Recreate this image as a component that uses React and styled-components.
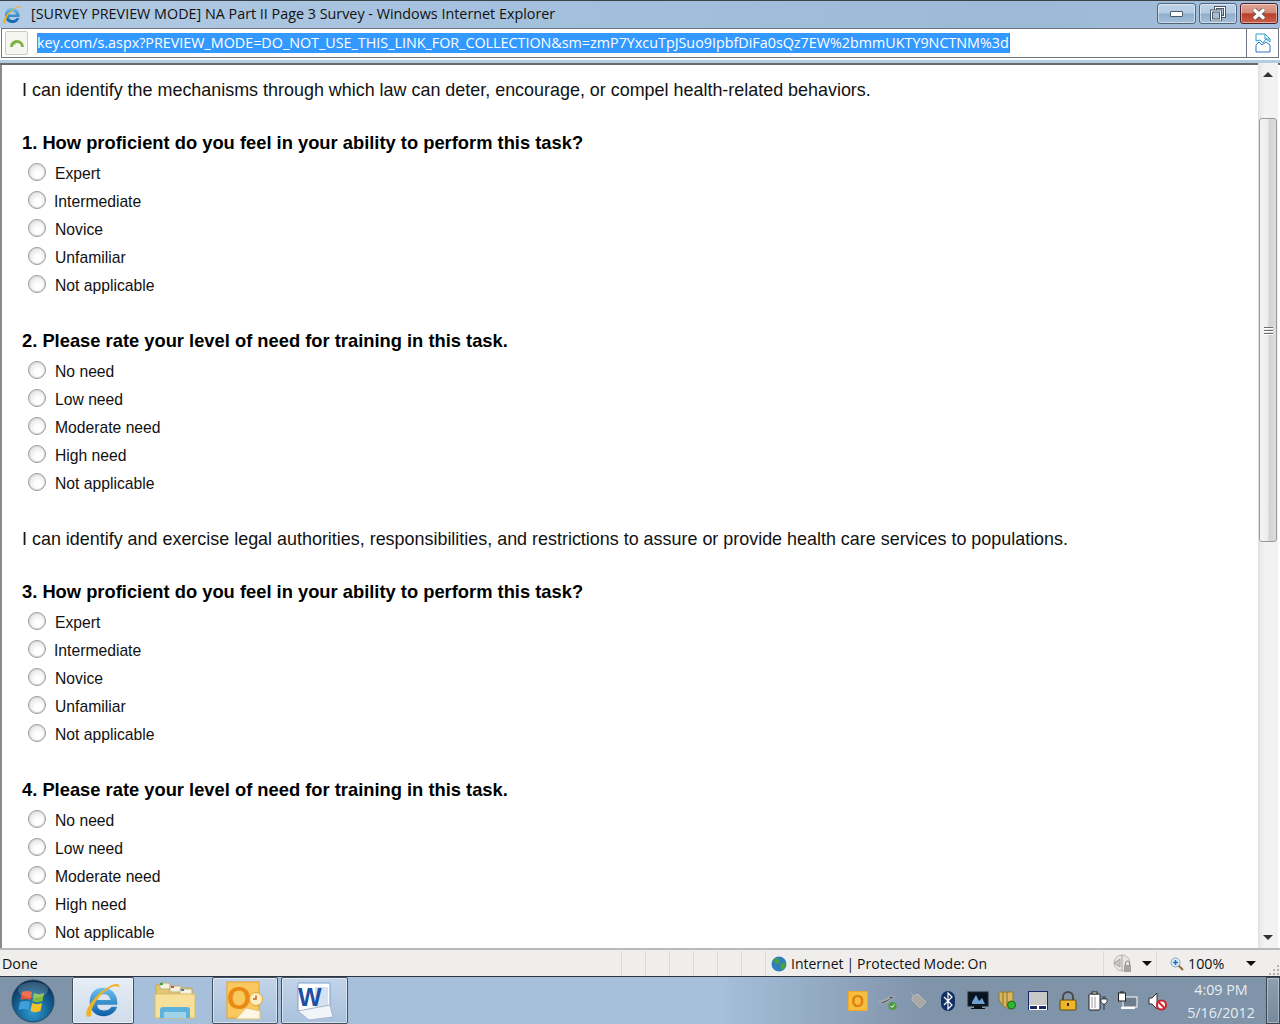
import React from 'react';
import styled, { createGlobalStyle } from 'styled-components';

const sections = [
  {
    intro: 'I can identify the mechanisms through which law can deter, encourage, or compel health-related behaviors.',
    n: 1,
  },
  {
    intro: 'I can identify and exercise legal authorities, responsibilities, and restrictions to assure or provide health care services to populations.',
    n: 3,
  },
];
const proficiency = ['Expert', 'Intermediate', 'Novice', 'Unfamiliar', 'Not applicable'];
const need = ['No need', 'Low need', 'Moderate need', 'High need', 'Not applicable'];

const Question = ({ title, options }) => (
  <QuestionBlock>
    <QuestionTitle>{title}</QuestionTitle>
    {options.map(o => (
      <Option key={o}>
        <Radio />
        <OptionLabel $tight={o === 'Intermediate'}>{o}</OptionLabel>
      </Option>
    ))}
  </QuestionBlock>
);

const IeLogo = ({ size }) => (
  <svg width={size} height={size} viewBox="0 0 40 40">
    <defs>
      <linearGradient id="ieBlue" x1="0" y1="0" x2="0" y2="1">
        <stop offset="0" stopColor="#6fc3ee" />
        <stop offset="1" stopColor="#0b5fa8" />
      </linearGradient>
    </defs>
    <path fillRule="evenodd" d="M20 6c9 0 15 7 15 15v3H14c0 4 3 6 7 6 3 0 6-1 8-4h6c-2 6-8 10-14 10-9 0-15-6-15-15S11 6 20 6zm-6 13h14c-1-4-3-6-7-6s-6 2-7 6z" fill="url(#ieBlue)" />
    <path d="M3 36C-1 30 14 10 30 3c5-2 8-1 7 3-1-2-4-2-7-1C17 11 6 27 8 35c-2 2-4 2-5 1z" fill="#eeb422" />
  </svg>
);

const StartOrb = () => (
  <svg width="44" height="44" viewBox="0 0 44 44">
    <defs>
      <radialGradient id="orb" cx="0.5" cy="0.75" r="0.75">
        <stop offset="0" stopColor="#2d9cd3" />
        <stop offset="0.7" stopColor="#0f4f7e" />
        <stop offset="1" stopColor="#0a2a4a" />
      </radialGradient>
    </defs>
    <circle cx="22" cy="22" r="21" fill="url(#orb)" stroke="#274a68" />
    <path d="M11 13c3-1.500 7-1.500 10 0l-1.500 8c-3-1.500-7-1.500-10 0z" fill="#e8532b" />
    <path d="M23 14c3 1.500 7 1.500 10 0l-1.500 8c-3 1.500-7 1.500-10 0z" fill="#7db93c" />
    <path d="M9 23c3-1.500 7-1.500 10 0l-1.500 8c-3-1.500-7-1.500-10 0z" fill="#3f9fdc" />
    <path d="M21 24c3 1.500 7 1.500 10 0l-1.500 8c-3 1.500-7 1.500-10 0z" fill="#f4c02c" />
    <ellipse cx="22" cy="11" rx="15" ry="8" fill="#fff" opacity="0.18" />
  </svg>
);

const FolderIcon = () => (
  <svg width="42" height="42" viewBox="0 0 42 42">
    <path d="M2 5h12l2 3h22v28H2z" fill="#e3c66e" stroke="#c9a94d" />
    <rect x="6" y="3" width="10" height="6" fill="#f7f2da" stroke="#b9b08a" />
    <rect x="6" y="3" width="3" height="2" fill="#3aa04a" />
    <rect x="16" y="6" width="11" height="6" fill="#f7f2da" stroke="#b9b08a" />
    <rect x="17" y="6" width="3" height="2" fill="#d64b3c" />
    <rect x="26" y="9" width="12" height="6" fill="#f7f2da" stroke="#b9b08a" />
    <rect x="27" y="9" width="3" height="2" fill="#3a83c8" />
    <path d="M1 14h40v24H1z" fill="#f6e09a" stroke="#d6bb6b" />
    <path d="M6 38v-8c0-2 1-3 3-3h24c2 0 3 1 3 3v8h-4v-6H10v6z" fill="#5fb2dc" />
    <path d="M10 32h22v6H10z" fill="#9ed3ea" />
  </svg>
);

const OutlookIcon = () => (
  <svg width="38" height="40" viewBox="0 0 38 40">
    <rect x="1" y="1" width="32" height="36" fill="#f9c85e" stroke="#e8a22a" />
    <path d="M10 38l10-11 14 3v8z" fill="#fdf6e3" stroke="#e3c27c" />
    <text x="1" y="28" fontFamily="Liberation Sans, sans-serif" fontWeight="700" fontSize="31" fill="#ea8a12">O</text>
    <circle cx="30" cy="18" r="6.500" fill="#fbeec4" stroke="#e8a22a" />
    <path d="M30 14.500V18h-3" fill="none" stroke="#c8641a" strokeWidth="1.500" />
  </svg>
);

const WordIcon = () => (
  <svg width="40" height="40" viewBox="0 0 40 40">
    <path d="M3 2h32v28H3z" fill="#fff" stroke="#7f9ccc" />
    <path d="M20 6h13v20H20z" fill="#d5e2f3" />
    <path d="M3 30l32-6 3 12-24 3z" fill="#f1f4f9" stroke="#a8b5cb" />
    <text x="3" y="25" fontFamily="Liberation Sans, sans-serif" fontWeight="700" fontSize="25" fill="#1e4fa5">W</text>
  </svg>
);

const BrokenPageIcon = () => (
  <svg width="16" height="20" viewBox="0 0 16 20" fill="none">
    <path d="M1 8V1h9l5 5v3l-4-3-3 4-3-3z" stroke="#2a9fd6" />
    <path d="M10 1v5h5" stroke="#2a9fd6" />
    <path d="M1 12l3-3 3 3 4-3 4 3v7H1z" stroke="#2a72c6" />
  </svg>
);

const GlobeIcon = () => (
  <svg width="16" height="16" viewBox="0 0 16 16">
    <circle cx="8" cy="8" r="7.500" fill="#2f7fbd" />
    <path d="M4 2l4 1 1 3-3 2-3-2zM9 8l5-1 1 2-3 5-2-1z" fill="#4aa23d" />
  </svg>
);

const SecurityIcon = () => (
  <svg width="20" height="20" viewBox="0 0 20 20">
    <circle cx="9" cy="9" r="8" fill="#e8e6e4" stroke="#bdbbb9" />
    <path d="M1 9l6-4v8zM9 1v16" stroke="#a9a7a5" fill="#c9c7c5" />
    <rect x="11" y="11" width="7" height="7" fill="#a5a3a1" />
    <path d="M12.500 11V9a2 2 0 0 1 4 0v2" fill="none" stroke="#8d8b89" />
  </svg>
);

const ZoomIcon = () => (
  <svg width="14" height="14" viewBox="0 0 14 14">
    <path d="M8.500 8.500l4.500 4.500" stroke="#8a6a3a" strokeWidth="2" />
    <circle cx="5.500" cy="5.500" r="4.500" fill="#dcecf8" stroke="#8aa0b5" />
    <path d="M3 5.500h5M5.500 3v5" stroke="#1a6fd0" strokeWidth="1.500" />
  </svg>
);

const TrayOutlook = () => (
  <svg width="20" height="20" viewBox="0 0 20 20">
    <rect x="0.500" y="0.500" width="19" height="19" fill="#f6bd3f" stroke="#f0a72a" />
    <text x="3.500" y="16" fontFamily="Liberation Sans, sans-serif" fontWeight="700" fontSize="16" fill="#e0800f">O</text>
  </svg>
);
const TrayUsb = () => (
  <svg width="20" height="20" viewBox="0 0 20 20">
    <path d="M1 11l12-6 4 1-12 7z" fill="#5d6368" stroke="#d5d8da" strokeWidth="0.500" />
    <path d="M3 11l9-4" stroke="#c7cbce" />
    <circle cx="14.500" cy="15" r="4" fill="#4f9a3d" />
    <path d="M12.500 15l1.500 1.500 2.500-3" stroke="#fff" fill="none" />
  </svg>
);
const TrayDiamond = () => (
  <svg width="20" height="20" viewBox="0 0 20 20">
    <path d="M3 2l2 2" stroke="#b5bac0" />
    <path d="M10 3l8 8-6 6-8-8 1-4z" fill="#a9a8a5" stroke="#bdbcb8" />
  </svg>
);
const TrayBluetooth = () => (
  <svg width="16" height="20" viewBox="0 0 16 20">
    <rect x="1" y="0" width="14" height="20" rx="7" fill="#0f2f66" />
    <path d="M4 6l8 8-4 4V2l4 4-8 8" stroke="#fff" strokeWidth="1.200" fill="none" />
  </svg>
);
const TrayMonitor = () => (
  <svg width="22" height="20" viewBox="0 0 22 20">
    <rect x="1" y="1" width="20" height="14" fill="#08131f" stroke="#20262c" />
    <path d="M5 11l4-7 3 6 3-3 3 6H5z" fill="#6ea0d0" />
    <rect x="7" y="15" width="8" height="2" fill="#111" />
    <rect x="4" y="17" width="14" height="1" fill="#111" />
  </svg>
);
const TrayShield = () => (
  <svg width="20" height="20" viewBox="0 0 20 20">
    <path d="M1 1h14v10l-4 7-6-3-4-6z" fill="#d9b65c" stroke="#8f7a3e" />
    <path d="M5 1v13M9 1v15" stroke="#8a6f2c" />
    <circle cx="13.500" cy="14" r="4" fill="#2fb52f" stroke="#176a17" />
  </svg>
);
const TrayPad = () => (
  <svg width="20" height="20" viewBox="0 0 20 20">
    <rect x="0.500" y="0.500" width="19" height="18" fill="#c8c8c8" stroke="#1c2a6a" />
    <rect x="1" y="14" width="18" height="5" fill="#fff" />
    <rect x="2" y="15" width="7" height="3" fill="#1c2a6a" />
    <rect x="11" y="15" width="7" height="3" fill="#1c2a6a" />
  </svg>
);
const TrayLock = () => (
  <svg width="18" height="20" viewBox="0 0 18 20">
    <path d="M4 9V6a5 5 0 0 1 10 0v3" fill="none" stroke="#4a4a4a" strokeWidth="2" />
    <rect x="1" y="9" width="16" height="10" rx="1" fill="#efb428" stroke="#5e4a12" />
    <rect x="8" y="12" width="2" height="3" fill="#3a2c08" />
  </svg>
);
const TrayBattery = () => (
  <svg width="20" height="20" viewBox="0 0 20 20">
    <rect x="1" y="3" width="11" height="16" rx="1" fill="#fff" stroke="#222" />
    <rect x="4" y="1" width="5" height="2" fill="#fff" stroke="#222" />
    <path d="M4 6v11M7 6v11" stroke="#999" />
    <path d="M13 8h6v3l-2 2h-2l-2-2zM15 5v3M17 5v3M16 13v6" fill="#fff" stroke="#222" strokeWidth="0.800" />
  </svg>
);
const TrayNetwork = () => (
  <svg width="20" height="20" viewBox="0 0 20 20">
    <rect x="5" y="6" width="14" height="10" fill="#6f7d8c" stroke="#fff" />
    <path d="M3 16h14v2H3z" fill="#fff" />
    <rect x="0.500" y="2" width="7" height="8" fill="#fff" stroke="#222" />
    <path d="M3 0v2M5 0v2" stroke="#222" />
  </svg>
);
const TrayMute = () => (
  <svg width="20" height="20" viewBox="0 0 20 20">
    <path d="M1 7h3l5-5v16l-5-5H1z" fill="#fff" stroke="#333" />
    <circle cx="13.500" cy="14" r="4.500" fill="#fff" stroke="#d3202a" strokeWidth="2" />
    <path d="M10.500 11l6 6" stroke="#d3202a" strokeWidth="2" />
  </svg>
);

const trayIcons = [
  TrayOutlook, TrayUsb, TrayDiamond, TrayBluetooth, TrayMonitor, TrayShield,
  TrayPad, TrayLock, TrayBattery, TrayNetwork, TrayMute,
];

const App = () => (
  <Screen>
    <GlobalStyle />
    <TitleBar>
      <TitleIcon><IeLogo size={20} /></TitleIcon>
      <TitleText>[SURVEY PREVIEW MODE] NA Part II Page 3 Survey - Windows Internet Explorer</TitleText>
      <WindowButtons>
        <WindowButton $width={39}>
          <MinGlyph />
        </WindowButton>
        <WindowButton $width={38}>
          <svg width="16" height="15" viewBox="0 0 16 15" fill="none">
            <rect x="5.500" y="1.500" width="9" height="9" stroke="#4a5868" strokeWidth="3" />
            <rect x="5.500" y="1.500" width="9" height="9" stroke="#fff" />
            <rect x="1.500" y="5" width="9" height="9" fill="#a5bfd9" stroke="#4a5868" strokeWidth="3" />
            <rect x="1.500" y="5" width="9" height="9" stroke="#fff" />
          </svg>
        </WindowButton>
        <CloseButton $width={38}>
          <svg width="16" height="12" viewBox="0 0 16 12">
            <path d="M3 1.500l10 9M13 1.500l-10 9" stroke="#5b5b5b" strokeWidth="5" />
            <path d="M3 1.500l10 9M13 1.500l-10 9" stroke="#fff" strokeWidth="3.400" />
          </svg>
        </CloseButton>
      </WindowButtons>
    </TitleBar>
    <AddressBar>
      <PageTab>
        <svg width="16" height="12" viewBox="0 0 16 12" fill="none">
          <path d="M2.500 10a5.500 5.500 0 0 1 11 0" stroke="#7cb342" strokeWidth="3" />
          <path d="M4 4.500l-3 3h6z" fill="#7cb342" />
        </svg>
      </PageTab>
      <UrlField>
        <UrlText>key.com/s.aspx?PREVIEW_MODE=DO_NOT_USE_THIS_LINK_FOR_COLLECTION&amp;sm=zmP7YxcuTpJSuo9IpbfDiFa0sQz7EW%2bmmUKTY9NCTNM%3d</UrlText>
      </UrlField>
      <CompatButton><BrokenPageIcon /></CompatButton>
    </AddressBar>
    <Viewport>
      <Page>
        {sections.map(s => (
          <Section key={s.n}>
            <Intro>{s.intro}</Intro>
            <Question title={`${s.n}. How proficient do you feel in your ability to perform this task?`} options={proficiency} />
            <Question title={`${s.n + 1}. Please rate your level of need for training in this task.`} options={need} />
          </Section>
        ))}
      </Page>
      <Scrollbar>
        <ScrollArrow><UpArrow /></ScrollArrow>
        <ScrollTrack>
          <ScrollThumb>
            <Grip /><Grip /><Grip />
          </ScrollThumb>
        </ScrollTrack>
        <ScrollArrow><DownArrow /></ScrollArrow>
      </Scrollbar>
    </Viewport>
    <StatusBar>
      <StatusDone>Done</StatusDone>
      <StatusCell /><StatusCell /><StatusCell /><StatusCell /><StatusCell /><StatusCell />
      <ZoneCell>
        <GlobeIcon />
        <ZoneText>Internet | Protected Mode: On</ZoneText>
      </ZoneCell>
      <SecurityCell>
        <SecurityIcon />
        <SmallCaret />
      </SecurityCell>
      <ZoomCell>
        <ZoomIcon />
        <span>100%</span>
        <SmallCaret />
      </ZoomCell>
      <ResizeGrip />
    </StatusBar>
    <Taskbar>
      <StartArea><StartOrb /></StartArea>
      <TaskButtons>
        <TaskButton $active $width={62}><IeLogo size={38} /></TaskButton>
        <TaskSlot><FolderIcon /></TaskSlot>
        <TaskButton $width={66}><OutlookIcon /></TaskButton>
        <TaskButton $width={67}><WordIcon /></TaskButton>
      </TaskButtons>
      <Tray>
        {trayIcons.map((Icon, i) => (
          <TraySlot key={i}><Icon /></TraySlot>
        ))}
        <Clock>
          <div>4:09 PM</div>
          <div>5/16/2012</div>
        </Clock>
        <ShowDesktop />
      </Tray>
    </Taskbar>
  </Screen>
);

export default App;

const GlobalStyle = createGlobalStyle`
  html, body {
    margin: 0;
    padding: 0;
    overflow: hidden;
  }
  * {
    box-sizing: border-box;
  }
`;

const Screen = styled.div`
  width: 1280px;
  height: 1024px;
  display: flex;
  flex-direction: column;
  overflow: hidden;
  background: #fff;
`;

const TitleBar = styled.div`
  height: 28px;
  flex: none;
  display: flex;
  align-items: center;
  padding: 0 2px 0 2px;
  border-top: 1px solid #3c4248;
  background: linear-gradient(90deg, #b3cbe4 0%, #a3c0dd 40%, #9cb9d6 80%, #a2bedb 100%);
`;

const TitleIcon = styled.div`
  width: 20px;
  height: 20px;
  display: flex;
`;

const TitleText = styled.div`
  margin-left: 9px;
  margin-top: -3px;
  font: 14.350px "Open Sans", "Noto Sans", sans-serif;
  color: #111;
  white-space: nowrap;
  flex: 1;
`;

const WindowButtons = styled.div`
  display: flex;
  gap: 3px;
  align-self: flex-start;
  margin-top: 2px;
`;

const WindowButton = styled.div`
  width: ${p => p.$width}px;
  height: 21px;
  display: flex;
  align-items: center;
  justify-content: center;
  border: 1px solid #51667c;
  border-radius: 3px;
  background: linear-gradient(180deg, #bcd2e8 0%, #b4cbe3 48%, #8fadca 52%, #a5c0da 100%);
  box-shadow: inset 0 0 0 1px rgba(255, 255, 255, 0.45);
`;

const CloseButton = styled(WindowButton)`
  border-color: #4c1f28;
  background: linear-gradient(180deg, #e1a497 0%, #d38a79 45%, #b8402a 52%, #c9604a 100%);
`;

const MinGlyph = styled.div`
  width: 13px;
  height: 6px;
  margin-top: 1px;
  background: #fff;
  border: 1px solid #4a5868;
  border-radius: 1px;
`;

const AddressBar = styled.div`
  height: 30px;
  flex: none;
  display: flex;
  margin: 0 1px 0 1px;
  background: #fff;
  border: 1px solid #6d7680;
  position: relative;
`;

const PageTab = styled.div`
  width: 23px;
  height: 24px;
  margin: 2px 0 0 3px;
  display: flex;
  align-items: center;
  justify-content: center;
  background: #f5f5f2;
  border: 1px solid #c9c9c4;
  border-radius: 2px;
  flex: none;
`;

const UrlField = styled.div`
  flex: 1;
  display: flex;
  align-items: center;
  padding-left: 9px;
  overflow: hidden;
`;

const UrlText = styled.span`
  height: 20px;
  font: 14.340px/20px "Open Sans", "Liberation Sans", Arial, sans-serif;
  color: #fff;
  background: #3399ff;
  border-right: 1px solid #c8641a;
  white-space: nowrap;
`;

const CompatButton = styled.div`
  width: 32px;
  flex: none;
  display: flex;
  align-items: center;
  justify-content: center;
  border-left: 1px solid #6d7680;
`;

const Viewport = styled.div`
  flex: 1;
  min-height: 0;
  display: flex;
  margin-top: 2px;
  padding: 0 2px 0 2px;
  border-top: 3px solid #b4cce4;
  background: #fff;
  box-shadow: inset 0 2px 0 #6a6a6a, inset 1px 0 0 #8a8a8a, inset 2px 0 0 #8a8a8a;
`;

const Page = styled.div`
  flex: 1;
  min-width: 0;
  overflow: hidden;
  padding: 0 0 0 20px;
`;

const Section = styled.div`
  &:first-child {
    margin-top: 15px;
  }
`;

const Intro = styled.p`
  margin: 0;
  height: 24px;
  font: 17.930px/24px "Liberation Sans", Arial, sans-serif;
  color: #111;
  white-space: nowrap;
`;

const QuestionBlock = styled.div`
  padding-top: 29px;
  &:last-child {
    padding-bottom: 29px;
  }
`;

const QuestionTitle = styled.h2`
  margin: 0;
  height: 24px;
  font: bold 18.330px/24px "Liberation Sans", Arial, sans-serif;
  color: #000;
  white-space: nowrap;
`;

const Option = styled.label`
  height: 28px;
  display: flex;
  align-items: center;
  padding-left: 6px;
  &:first-of-type {
    margin-top: 5px;
  }
`;

const Radio = styled.span`
  width: 18px;
  height: 18px;
  margin-top: -4px;
  border-radius: 50%;
  border: 1px solid #9a9a9a;
  background: radial-gradient(circle at 60% 65%, #ffffff 25%, #ececec 60%, #c8c8c8 100%);
  box-shadow: inset 0 0 0 1px #e0e0e0;
  flex: none;
`;

const OptionLabel = styled.span`
  margin-left: ${p => (p.$tight ? '8px' : '9px')};
  font: 15.700px "Liberation Sans", Arial, sans-serif;
  color: #111;
`;

const Scrollbar = styled.div`
  width: 20px;
  flex: none;
  display: flex;
  flex-direction: column;
  background: linear-gradient(90deg, #e6e6e6, #f3f3f3 30%, #f1f1f1);
  border-left: 1px solid #e0e0e0;
`;

const ScrollArrow = styled.div`
  height: 22px;
  flex: none;
  display: flex;
  align-items: center;
  justify-content: center;
  padding-right: 2px;
`;

const UpArrow = styled.div`
  width: 0;
  height: 0;
  border-left: 5px solid transparent;
  border-right: 5px solid transparent;
  border-bottom: 5px solid #333;
`;

const DownArrow = styled.div`
  width: 0;
  height: 0;
  border-left: 5px solid transparent;
  border-right: 5px solid transparent;
  border-top: 5px solid #333;
`;

const ScrollTrack = styled.div`
  flex: 1;
  padding-top: 33px;
`;

const ScrollThumb = styled.div`
  height: 424px;
  margin-right: 1px;
  display: flex;
  flex-direction: column;
  justify-content: center;
  align-items: center;
  gap: 2px;
  border: 1px solid #9a9a9a;
  border-radius: 3px;
  background: linear-gradient(90deg, #f4f4f4, #ededed 50%, #d3d3d3 55%, #dcdcdc);
`;

const Grip = styled.div`
  width: 9px;
  height: 1px;
  background: #6e6e6e;
  box-shadow: 0 1px 0 #fff;
`;

const StatusBar = styled.div`
  height: 28px;
  flex: none;
  display: flex;
  align-items: stretch;
  padding-top: 1px;
  background: #f0eeed;
  border-top: 2px solid #b9b9b9;
  font: 14.300px "Open Sans", "Noto Sans", sans-serif;
  color: #111;
  position: relative;
`;

const StatusDone = styled.div`
  width: 622px;
  flex: none;
  padding-left: 2px;
  display: flex;
  align-items: center;
  border-right: 1px solid #dcdad8;
`;

const StatusCell = styled.div`
  width: 24px;
  flex: none;
  border-right: 1px solid #dcdad8;
`;

const ZoneCell = styled.div`
  width: 338px;
  flex: none;
  display: flex;
  align-items: center;
  gap: 4px;
  padding-left: 5px;
  border-right: 1px solid #dcdad8;
`;

const ZoneText = styled.span`
  font-size: 14px;
  word-spacing: -0.700px;
`;

const SecurityCell = styled.div`
  width: 53px;
  flex: none;
  display: flex;
  align-items: center;
  gap: 9px;
  padding-left: 9px;
  border-right: 1px solid #dcdad8;
`;

const ZoomCell = styled.div`
  display: flex;
  align-items: center;
  padding-left: 13px;
  gap: 4px;
  flex: 1;
  & > span {
    margin-right: 18px;
    margin-top: -1px;
  }
`;

const SmallCaret = styled.div`
  width: 0;
  height: 0;
  border-left: 5px solid transparent;
  border-right: 5px solid transparent;
  border-top: 5px solid #111;
`;

const ResizeGrip = styled.div`
  position: absolute;
  right: 1px;
  bottom: 1px;
  width: 11px;
  height: 11px;
  background-image: radial-gradient(#b0b0b0 1px, transparent 1px);
  background-size: 4px 4px;
  clip-path: polygon(100% 0, 100% 100%, 0 100%);
`;

const Taskbar = styled.div`
  height: 48px;
  flex: none;
  display: flex;
  align-items: stretch;
  background: #a6bfda;
  border-top: 1px solid #2b3440;
`;

const StartArea = styled.div`
  width: 72px;
  flex: none;
  display: flex;
  align-items: center;
  padding-left: 11px;
  background: #7f93a9;
`;

const TaskButtons = styled.div`
  display: flex;
  align-items: stretch;
  gap: 3px;
  flex: none;
`;

const TaskButton = styled.div`
  width: ${p => p.$width}px;
  display: flex;
  align-items: center;
  justify-content: center;
  border: 1px solid #44505e;
  border-radius: 2px;
  background: ${p =>
    p.$active
      ? 'linear-gradient(180deg, #e6edf5, #cfdceb)'
      : 'linear-gradient(180deg, #c2d4e8, #a9c1dc)'};
  box-shadow: inset 0 0 0 1px rgba(255, 255, 255, 0.5);
`;

const TaskSlot = styled.div`
  width: 72px;
  padding-left: 4px;
  display: flex;
  align-items: center;
  justify-content: center;
`;

const Tray = styled.div`
  flex: 1;
  display: flex;
  align-items: center;
  justify-content: flex-end;
  background: linear-gradient(90deg, #a6bfda 0%, #a6bfda 40%, #7f93a9 62%, #7f93a9 100%);
`;

const TraySlot = styled.div`
  width: 30px;
  height: 22px;
  flex: none;
  display: flex;
  align-items: center;
  justify-content: center;
`;

const Clock = styled.div`
  width: 93px;
  padding-left: 3px;
  flex: none;
  text-align: center;
  font: 14.300px/23px "Open Sans", "Noto Sans", sans-serif;
  color: #e8edf3;
`;

const ShowDesktop = styled.div`
  width: 14px;
  align-self: stretch;
  flex: none;
  border: 1px solid #3c4652;
  background: linear-gradient(180deg, #8f9fb1, #76899e);
  box-shadow: inset 0 0 0 1px rgba(255, 255, 255, 0.35);
`;
